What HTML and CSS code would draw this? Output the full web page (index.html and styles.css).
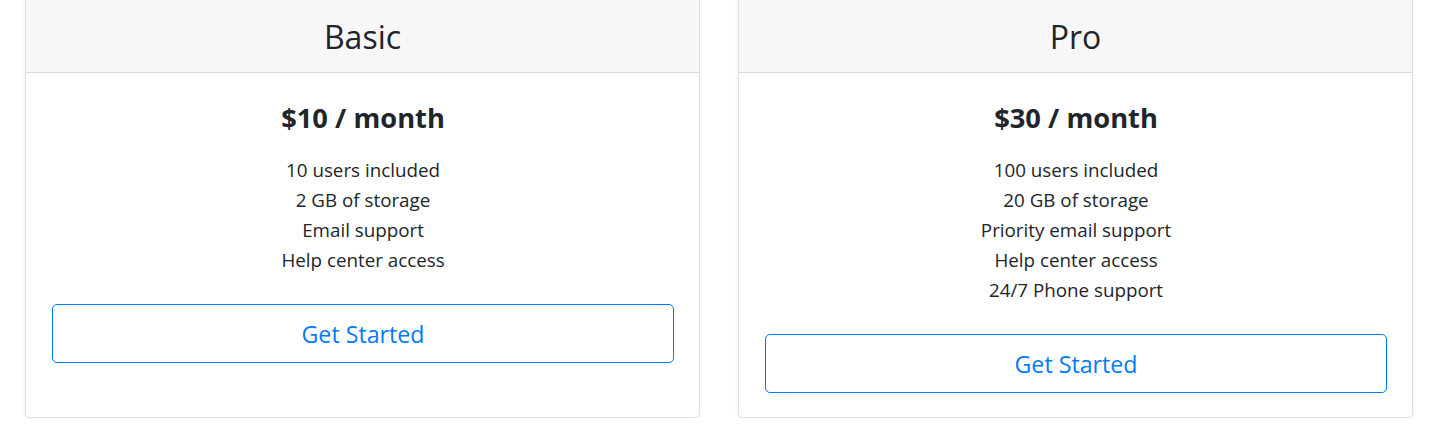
FILE: index.html
```html
<!DOCTYPE html>
<html lang="en">
<head>
<meta charset="utf-8">
<title>Pricing</title>
<link rel="stylesheet" href="styles.css">
</head>
<body>
<div class="deck">
  <div class="card">
    <div class="card-header"><h4 class="plan">Basic</h4></div>
    <div class="card-body">
      <h1 class="price">$10 / month</h1>
      <ul class="features">
        <li>10 users included</li>
        <li>2 GB of storage</li>
        <li>Email support</li>
        <li>Help center access</li>
      </ul>
      <button class="btn" type="button">Get Started</button>
    </div>
  </div>
  <div class="card">
    <div class="card-header"><h4 class="plan">Pro</h4></div>
    <div class="card-body">
      <h1 class="price">$30 / month</h1>
      <ul class="features">
        <li>100 users included</li>
        <li>20 GB of storage</li>
        <li>Priority email support</li>
        <li>Help center access</li>
        <li>24/7 Phone support</li>
      </ul>
      <button class="btn" type="button">Get Started</button>
    </div>
  </div>
</div>
</body>
</html>
```
FILE: styles.css
```css
html, body {
  margin: 0;
  padding: 0;
  background: #fff;
}
body {
  font-family: "Open Sans", "Noto Sans", sans-serif;
  color: #212529;
}
.deck {
  display: flex;
  align-items: stretch;
  gap: 38px;
  padding: 0 28px 0 25px;
  margin-top: -11px;
}
.card {
  flex: 1 1 0;
  display: flex;
  flex-direction: column;
  border: 1px solid rgba(0, 0, 0, 0.125);
  border-radius: 5px;
  box-shadow: 0 2px 4px rgba(0, 0, 0, 0.075);
  background: #fff;
  overflow: hidden;
}
.card-header {
  background: #f7f7f7;
  border-bottom: 1px solid rgba(0, 0, 0, 0.125);
  height: 83px;
  display: flex;
  align-items: center;
  justify-content: center;
  padding-top: 12px;
  box-sizing: border-box;
}
.plan {
  margin: 0;
  font-size: 32px;
  font-weight: 400;
  line-height: 40px;
}
.card-body {
  padding: 26px 25px 24px 26px;
  text-align: center;
  display: flex;
  flex-direction: column;
}
.price {
  margin: 0 0 18px;
  font-size: 27.3px;
  font-weight: 700;
  line-height: 38px;
}
.features {
  list-style: none;
  margin: 0 0 29px;
  padding: 0;
  font-size: 18.8px;
  line-height: 30px;
}
.btn {
  display: block;
  width: 100%;
  height: 59px;
  box-sizing: border-box;
  border: 1px solid #007bff;
  border-radius: 5px;
  background: transparent;
  color: #007bff;
  font-family: inherit;
  font-size: 23.2px;
  line-height: 30px;
  padding: 0;
}
```
